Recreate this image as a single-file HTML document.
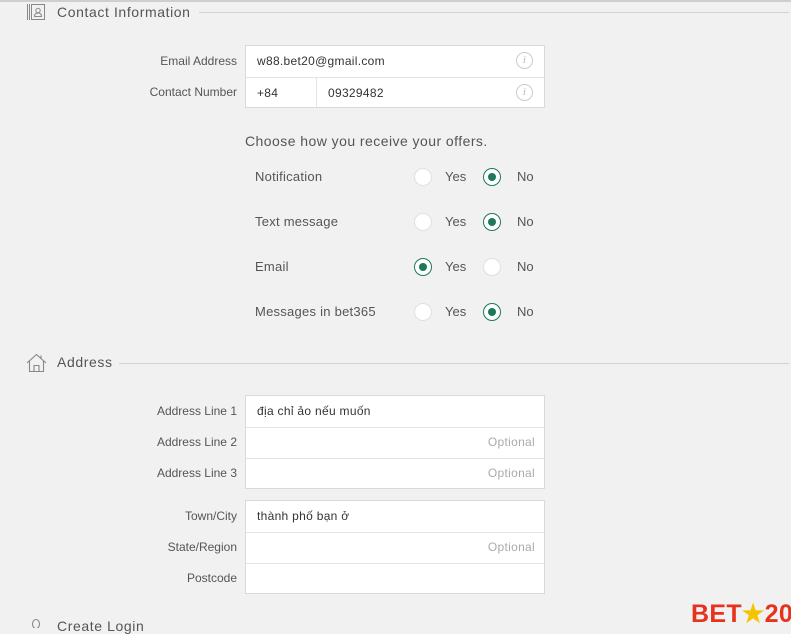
<!DOCTYPE html>
<html><head><meta charset="utf-8"><style>
*{margin:0;padding:0;box-sizing:border-box}
body{width:791px;height:627px;overflow:hidden;background:#f1f1f1;font-family:"Liberation Sans","Noto Sans CJK SC",sans-serif;position:relative;color:#545454}
.a{position:absolute}
.h{font-size:14px;color:#555;letter-spacing:.6px}
.line{height:1px;background:#d2d2d2}
.lab{font-size:12px;color:#555;text-align:right;width:200px;left:37px}
.box{background:#fff;border:1px solid #d9d9d9}
.row{position:absolute;left:0;right:0;height:31px;border-top:1px solid #e3e3e3;font-size:12px;letter-spacing:.3px;color:#333;padding:8px 0 0 11px}
.row:first-child{border-top:none}
.opt{position:absolute;right:9px;top:7px;color:#aaa;font-size:12px}
.info{position:absolute;right:11px;top:6px;width:17px;height:17px;border:1px solid #ccc;border-radius:50%;color:#bbb;font:italic 11px "Liberation Serif",serif;text-align:center;line-height:15px}
.rl{font-size:13px;color:#555;left:255px;letter-spacing:.25px}
.rad{width:18px;height:18px;border-radius:50%;background:#fff;border:1px solid #e0e0e0}
.on{border:1.5px solid #1c7a5a}
.on::after{content:"";position:absolute;left:3.5px;top:3.5px;width:8px;height:8px;border-radius:50%;background:#1c7a5a}
.yn{font-size:13px;color:#555}
</style></head><body>
<div class="a" style="left:0;top:0;width:791px;height:2px;background:#cfcfcf"></div>
<svg class="a" style="left:26px;top:3px" width="20" height="18" viewBox="0 0 20 18"><g fill="none" stroke="#888" stroke-width="1"><path d="M1.5 1v16M3.5 1v16"/><rect x="5.5" y="1.5" width="13" height="15"/><circle cx="12" cy="7.5" r="2.2"/><path d="M8.5 13.5q0-3.5 3.5-3.5t3.5 3.5z"/></g></svg>
<div class="a h" style="left:57px;top:4px">Contact Information</div>
<div class="a line" style="left:199px;top:12px;width:590px"></div>

<div class="a lab" style="top:54px">Email Address</div>
<div class="a lab" style="top:85px">Contact Number</div>
<div class="a box" style="left:245px;top:45px;width:300px;height:63px">
<div class="row" style="top:0">w88.bet20@gmail.com<div class="info">i</div></div>
<div class="row" style="top:31px">+84<span style="position:absolute;left:70px;top:0;bottom:0;border-left:1px solid #e3e3e3;padding:8px 0 0 11px">09329482</span><div class="info">i</div></div>
</div>

<div class="a" style="left:245px;top:133px;font-size:14px;color:#555;letter-spacing:.45px">Choose how you receive your offers.</div>

<div class="a rl" style="top:169px">Notification</div>
<div class="a rl" style="top:214px">Text message</div>
<div class="a rl" style="top:259px">Email</div>
<div class="a rl" style="top:304px">Messages in bet365</div>

<div class="a rad" style="left:414px;top:168px"></div><div class="a yn" style="left:445px;top:169px">Yes</div>
<div class="a rad on" style="left:483px;top:168px"></div><div class="a yn" style="left:517px;top:169px">No</div>
<div class="a rad" style="left:414px;top:213px"></div><div class="a yn" style="left:445px;top:214px">Yes</div>
<div class="a rad on" style="left:483px;top:213px"></div><div class="a yn" style="left:517px;top:214px">No</div>
<div class="a rad on" style="left:414px;top:258px"></div><div class="a yn" style="left:445px;top:259px">Yes</div>
<div class="a rad" style="left:483px;top:258px"></div><div class="a yn" style="left:517px;top:259px">No</div>
<div class="a rad" style="left:414px;top:303px"></div><div class="a yn" style="left:445px;top:304px">Yes</div>
<div class="a rad on" style="left:483px;top:303px"></div><div class="a yn" style="left:517px;top:304px">No</div>

<svg class="a" style="left:26px;top:353px" width="21" height="20" viewBox="0 0 21 20"><g fill="none" stroke="#888" stroke-width="1.1"><path d="M1 10L10.5 1.5 20 10"/><path d="M3.5 8v10.5h14V8"/><path d="M8 18.5v-6h5v6"/><path d="M15 2.5v3.5"/></g></svg>
<div class="a h" style="left:57px;top:354px">Address</div>
<div class="a line" style="left:119px;top:363px;width:670px"></div>

<div class="a lab" style="top:404px">Address Line 1</div>
<div class="a lab" style="top:435px">Address Line 2</div>
<div class="a lab" style="top:466px">Address Line 3</div>
<div class="a box" style="left:245px;top:395px;width:300px;height:94px">
<div class="row" style="top:0">địa chỉ ảo nếu muốn</div>
<div class="row" style="top:31px"><span class="opt">Optional</span></div>
<div class="row" style="top:62px"><span class="opt">Optional</span></div>
</div>

<div class="a lab" style="top:509px">Town/City</div>
<div class="a lab" style="top:540px">State/Region</div>
<div class="a lab" style="top:571px">Postcode</div>
<div class="a box" style="left:245px;top:500px;width:300px;height:94px">
<div class="row" style="top:0">thành phố bạn ở</div>
<div class="row" style="top:31px"><span class="opt">Optional</span></div>
<div class="row" style="top:62px"></div>
</div>

<svg class="a" style="left:30px;top:618px" width="12" height="10"><ellipse cx="6" cy="6" rx="3.5" ry="4.5" fill="none" stroke="#888" stroke-width="1.1"/></svg>
<div class="a h" style="left:57px;top:618px">Create Login</div>

<div class="a" style="left:691px;top:599px;font:900 25px 'Liberation Sans',sans-serif;color:#e8321e;letter-spacing:.3px">BET<span style="color:#f5c400">★</span>20</div>
</body></html>
